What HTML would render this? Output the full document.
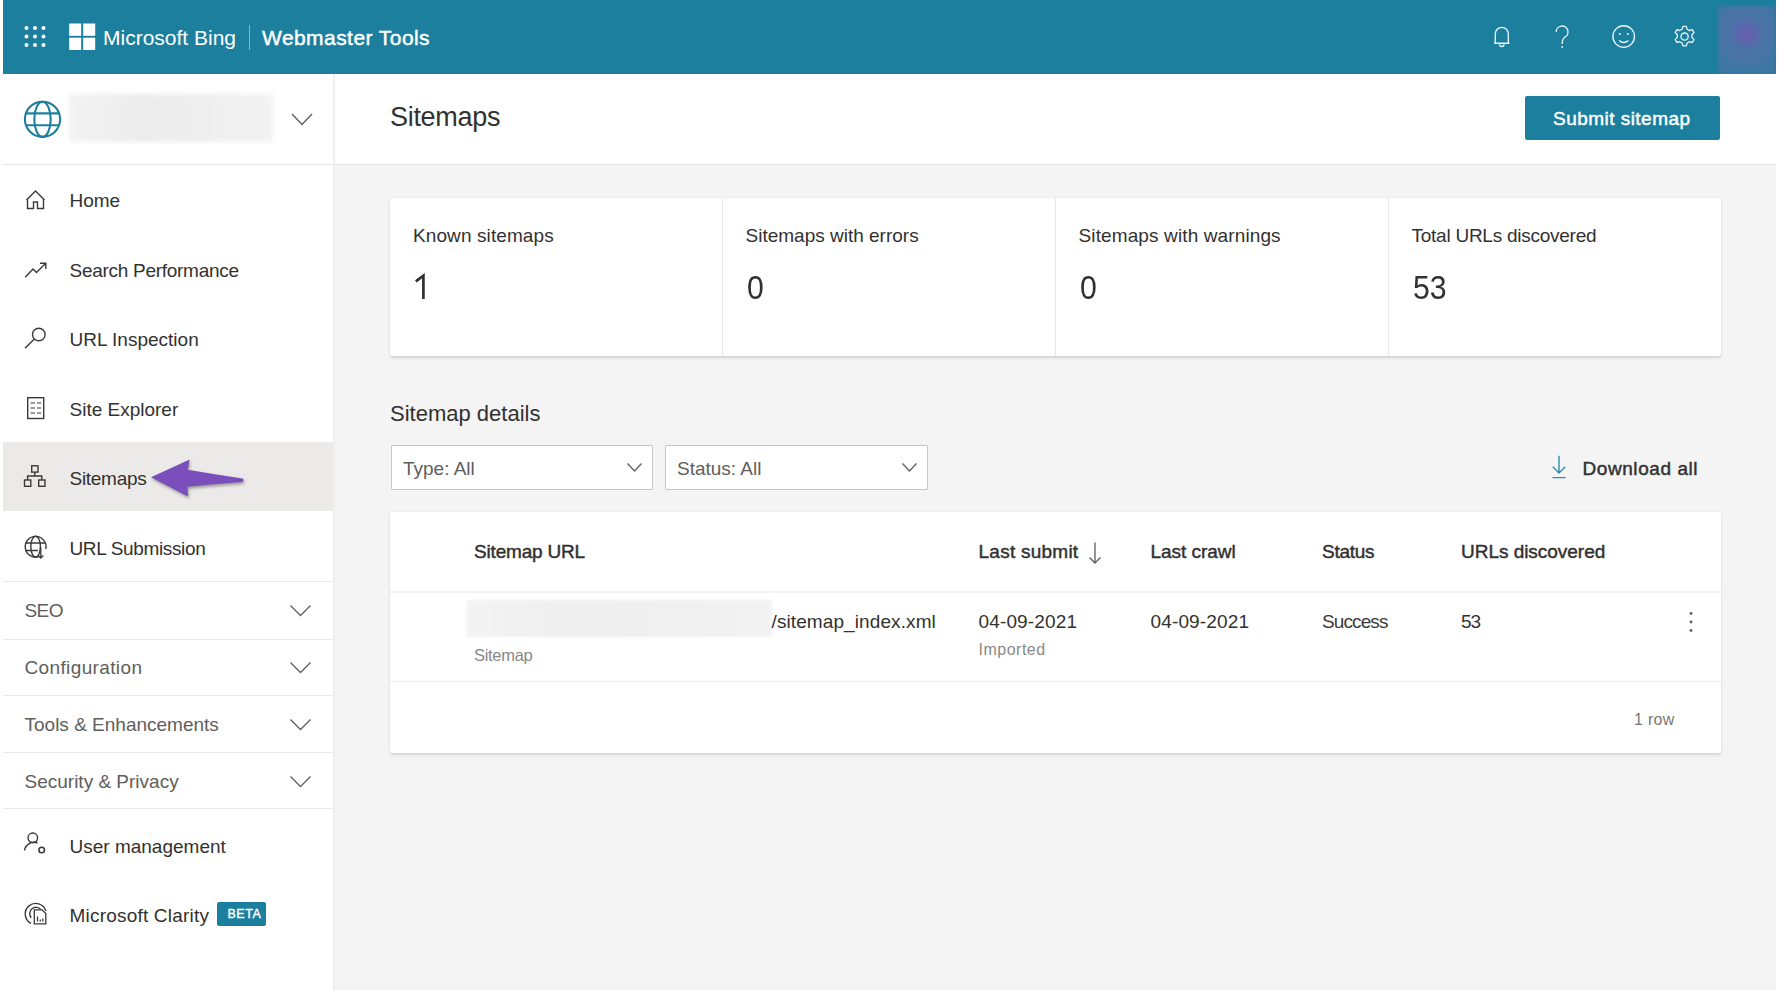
<!DOCTYPE html>
<html><head><meta charset="utf-8">
<style>
html,body{margin:0;padding:0;width:1780px;height:990px;overflow:hidden;background:#fff;font-family:"Liberation Sans",sans-serif;}
.a{position:absolute;}
.t{position:absolute;white-space:nowrap;line-height:1;color:#323130;}
svg{position:absolute;overflow:visible;}
</style></head><body>
<div class="a" style="left:3px;top:0px;width:1773px;height:74px;background:#1d7f9e;"></div>
<svg style="left:0;top:0" width="60" height="73"><g fill="#fff">
<circle cx="26.5" cy="28" r="2"/><circle cx="35" cy="28" r="2"/><circle cx="43.5" cy="28" r="2"/>
<circle cx="26.5" cy="36.5" r="2"/><circle cx="35" cy="36.5" r="2"/><circle cx="43.5" cy="36.5" r="2"/>
<circle cx="26.5" cy="45" r="2"/><circle cx="35" cy="45" r="2"/><circle cx="43.5" cy="45" r="2"/></g></svg>
<svg style="left:69px;top:23px" width="27" height="28"><g fill="#fff">
<rect x="0.2" y="0.5" width="12" height="12.3"/><rect x="14.2" y="0.5" width="12" height="12.3"/>
<rect x="0.2" y="14.7" width="12" height="12.3"/><rect x="14.2" y="14.7" width="12" height="12.3"/></g></svg>
<div class="t" style="left:103px;top:27.12px;font-size:21px;color:#fff;font-weight:normal;">Microsoft Bing</div>
<div class="a" style="left:249px;top:25px;width:1px;height:25px;background:rgba(255,255,255,.45);"></div>
<div class="t" style="left:262px;top:27.12px;font-size:21px;color:#fff;font-weight:normal;letter-spacing:0.44px;-webkit-text-stroke:0.45px #fff">Webmaster Tools</div>
<svg style="left:1490px;top:22px" width="24" height="28" fill="none" stroke="#e8f5f9" stroke-width="1.35">
<path d="M5.3 21 V11.8 a6.5 6.5 0 0 1 13 0 V21 M4 21.2 H19.6 M9.6 22.3 a2.2 2.2 0 0 0 4.4 0"/></svg>
<svg style="left:1552px;top:22px" width="20" height="28" fill="none" stroke="#e8f5f9" stroke-width="1.35">
<path d="M4.2 10 a5.9 5.9 0 1 1 8.5 5.2 C10.8 16.4 10.2 18 10.2 22"/><circle cx="10.2" cy="25" r="0.95" fill="#e8f5f9" stroke="none"/></svg>
<svg style="left:1612px;top:24px" width="24" height="24" fill="none" stroke="#e8f5f9" stroke-width="1.35">
<circle cx="11.7" cy="12.5" r="10.8"/><path d="M7 16.5 Q11.7 20.5 16.4 16.5"/><path d="M6.8 10 H8.8 M14.8 10 H16.8" stroke-width="1.5"/></svg>
<svg style="left:1673px;top:25px" width="24" height="24" fill="none" stroke="#e8f5f9" stroke-width="1.3">
<path d="M9.9 1.3 h3.4 l0.8 2.9 l2.3 1.3 l2.9 -0.8 l1.7 2.9 l-2.1 2.2 v2.6 l2.1 2.2 l-1.7 2.9 l-2.9 -0.8 l-2.3 1.3 l-0.8 2.9 h-3.4 l-0.8 -2.9 l-2.3 -1.3 l-2.9 0.8 l-1.7 -2.9 l2.1 -2.2 v-2.6 l-2.1 -2.2 l1.7 -2.9 l2.9 0.8 l2.3 -1.3 Z" stroke-linejoin="round"/>
<circle cx="11.6" cy="11.6" r="3.6"/></svg>
<div class="a" style="left:1717px;top:5px;width:59px;height:69px;background:radial-gradient(circle at 50% 42%,#6b5db0 0px,#5a67ac 9px,#4b73a6 16px,#4a74a6 26px,#3f77a3 34px);box-shadow:inset 0 0 3px 1px rgba(29,127,158,.7)"></div>
<div class="a" style="left:3px;top:74px;width:1773px;height:90px;background:#fff;"></div>
<div class="a" style="left:3px;top:164px;width:1773px;height:1px;background:#e6e6e6;"></div>
<svg style="left:22px;top:99px" width="42" height="42" fill="none" stroke="#1d7f9e" stroke-width="2.1">
<circle cx="20.5" cy="20.3" r="17.6"/><ellipse cx="20.5" cy="20.3" rx="8.2" ry="17.6"/><path d="M3.5 14.4 H37.5 M3.5 26.3 H37.5"/></svg>
<div class="a" style="left:69px;top:94px;width:204px;height:48px;background:linear-gradient(90deg,#f3f3f3 0%,#ececec 35%,#eeeeee 65%,#f2f2f2 100%);filter:blur(2.5px)"></div>
<svg style="left:290px;top:112px" width="24" height="16" fill="none" stroke="#605e5c" stroke-width="1.4"><path d="M2 2 L12 12.5 L22 2"/></svg>
<div class="t" style="left:390px;top:103.54px;font-size:27px;color:#323130;font-weight:normal;letter-spacing:-0.3px">Sitemaps</div>
<div class="a" style="left:1525px;top:96px;width:195px;height:44px;background:#1d7f9e;border-radius:2px"></div>
<div class="t" style="left:1553px;top:108.92px;font-size:19px;color:#fff;font-weight:normal;letter-spacing:0.47px;-webkit-text-stroke:0.45px #fff">Submit sitemap</div>
<div class="a" style="left:335px;top:165px;width:1441px;height:825px;background:#f4f4f4;"></div>
<div class="a" style="left:3px;top:165px;width:330px;height:825px;background:#fff;"></div>
<div class="a" style="left:333px;top:74px;width:2px;height:916px;background:#eeeeee;"></div>
<div class="a" style="left:3px;top:442px;width:330px;height:69px;background:#ebeae8;"></div>
<div class="t" style="left:69.5px;top:191.42px;font-size:19px;color:#323130;font-weight:normal;">Home</div>
<div class="t" style="left:69.5px;top:260.92px;font-size:19px;color:#323130;font-weight:normal;letter-spacing:-0.28px">Search Performance</div>
<div class="t" style="left:69.5px;top:330.42px;font-size:19px;color:#323130;font-weight:normal;">URL Inspection</div>
<div class="t" style="left:69.5px;top:399.92px;font-size:19px;color:#323130;font-weight:normal;">Site Explorer</div>
<div class="t" style="left:69.5px;top:469.42px;font-size:19px;color:#323130;font-weight:normal;letter-spacing:-0.28px">Sitemaps</div>
<div class="t" style="left:69.5px;top:538.92px;font-size:19px;color:#323130;font-weight:normal;letter-spacing:-0.35px">URL Submission</div>
<div class="a" style="left:3px;top:581px;width:330px;height:1px;background:#e9e9e9;"></div>
<div class="a" style="left:3px;top:639px;width:330px;height:1px;background:#e9e9e9;"></div>
<div class="a" style="left:3px;top:695px;width:330px;height:1px;background:#e9e9e9;"></div>
<div class="a" style="left:3px;top:752px;width:330px;height:1px;background:#e9e9e9;"></div>
<div class="a" style="left:3px;top:808px;width:330px;height:1px;background:#e9e9e9;"></div>
<div class="t" style="left:24.5px;top:600.62px;font-size:19px;color:#605e5c;font-weight:normal;letter-spacing:-0.6px">SEO</div>
<svg style="left:288px;top:602.7px" width="26" height="16" fill="none" stroke="#605e5c" stroke-width="1.3"><path d="M2.5 2.5 L12.5 12.5 L22.5 2.5"/></svg>
<div class="t" style="left:24.5px;top:657.62px;font-size:19px;color:#605e5c;font-weight:normal;letter-spacing:0.37px">Configuration</div>
<svg style="left:288px;top:659.7px" width="26" height="16" fill="none" stroke="#605e5c" stroke-width="1.3"><path d="M2.5 2.5 L12.5 12.5 L22.5 2.5"/></svg>
<div class="t" style="left:24.5px;top:714.62px;font-size:19px;color:#605e5c;font-weight:normal;">Tools &amp; Enhancements</div>
<svg style="left:288px;top:716.7px" width="26" height="16" fill="none" stroke="#605e5c" stroke-width="1.3"><path d="M2.5 2.5 L12.5 12.5 L22.5 2.5"/></svg>
<div class="t" style="left:24.5px;top:771.62px;font-size:19px;color:#605e5c;font-weight:normal;">Security &amp; Privacy</div>
<svg style="left:288px;top:773.7px" width="26" height="16" fill="none" stroke="#605e5c" stroke-width="1.3"><path d="M2.5 2.5 L12.5 12.5 L22.5 2.5"/></svg>
<div class="t" style="left:69.5px;top:837.22px;font-size:19px;color:#323130;font-weight:normal;">User management</div>
<div class="t" style="left:69.5px;top:906.02px;font-size:19px;color:#323130;font-weight:normal;letter-spacing:0.2px">Microsoft Clarity</div>
<svg style="left:0;top:0" width="60" height="990" fill="none" stroke="#3b3a39" stroke-width="1.4">
<path d="M26.5 200 L35.5 191 L44.5 200 M27.5 199 V208.5 H33.5 V202 H37.5 V208.5 H43.5 V199"/>
<path d="M25.2 277.3 L33 269 L36.5 272.5 L45.5 263.5 M40 263.2 H45.8 V269"/>
<circle cx="38.8" cy="334.5" r="6.3"/><path d="M34.3 339 L25 348.3"/>
<rect x="27.7" y="397.7" width="16" height="20.8"/><path d="M30.5 403 H35 M37 403 H41 M30.5 408 H35 M37 408 H41 M30.5 413 H35 M37 413 H41" stroke-width="1.2"/>
<rect x="31.7" y="465.8" width="6.3" height="6.3"/><rect x="24.5" y="480" width="6.3" height="6.3"/><rect x="38.7" y="480" width="6.3" height="6.3"/>
<path d="M34.8 472 V476 M27.6 480 V476 H41.8 V480"/>
<path d="M39 556.6 A10.4 10.4 0 1 1 45.8 549"/><ellipse cx="35.6" cy="546.6" rx="4.8" ry="10.4"/><path d="M25.5 543 H45.5 M25.5 550.5 H38"/><path d="M40.8 547.5 V558 M38.3 555.5 L40.8 558 L43.3 555.5" stroke-width="1.3"/>
<circle cx="32.8" cy="837.8" r="4.8"/><path d="M24.5 850.5 A9.5 9.5 0 0 1 37.5 843"/><circle cx="41.7" cy="850" r="2.8" stroke-width="1.6"/>
<path d="M31 923.3 A10.5 10.5 0 1 1 45.8 911 M31.2 917.8 A6.2 6.2 0 1 1 41 909.6"/>
<path d="M34.3 909.8 H42 L45.8 913.6 V923.8 H34.3 Z" fill="#fff" stroke-width="1.3"/><path d="M37.5 921.5 V916.5 M40.3 921.5 V919.5 M42.8 921.5 V918.5" stroke-width="1.3"/>
</svg>
<div class="a" style="left:217px;top:902px;width:49px;height:24px;background:#1d7f9e;border-radius:2px"></div>
<div class="t" style="left:227.5px;top:907.92px;font-size:12.5px;color:#fff;font-weight:normal;letter-spacing:0.5px;-webkit-text-stroke:0.35px #fff">BETA</div>
<svg style="left:0;top:0;filter:drop-shadow(1px 2px 1.5px rgba(0,0,0,.35))" width="260" height="520"><path fill="#7b4fbb" d="M151 477.3 L189.6 459.4 L187.8 469.8 Q215 474.5 242.5 478.6 Q245 480.3 242 482 Q215 484 187.5 486.8 L188 496.5 Z"/></svg>
<div class="a" style="left:390px;top:198px;width:1331px;height:158px;background:#fff;box-shadow:0 1.5px 3px rgba(0,0,0,.13),0 0 1px rgba(0,0,0,.08);border-radius:2px"></div>
<div class="a" style="left:722px;top:198px;width:1px;height:158px;background:#e8e8e8;"></div>
<div class="a" style="left:1055px;top:198px;width:1px;height:158px;background:#e8e8e8;"></div>
<div class="a" style="left:1388px;top:198px;width:1px;height:158px;background:#e8e8e8;"></div>
<div class="t" style="left:413px;top:225.92px;font-size:19px;color:#323130;font-weight:normal;letter-spacing:0.1px">Known sitemaps</div>
<svg style="left:0;top:0" width="440" height="310" fill="none" stroke="#323130" stroke-width="2.7"><path d="M415.8 281.3 L423.4 275.6 V299" stroke-linejoin="miter"/></svg>
<div class="t" style="left:745.5px;top:225.92px;font-size:19px;color:#323130;font-weight:normal;letter-spacing:0px">Sitemaps with errors</div>
<div class="t" style="left:747.0px;top:270.12px;font-size:34px;color:#323130;font-weight:normal;transform:scaleX(0.89);transform-origin:0 0">0</div>
<div class="t" style="left:1078.5px;top:225.92px;font-size:19px;color:#323130;font-weight:normal;letter-spacing:0.12px">Sitemaps with warnings</div>
<div class="t" style="left:1080.0px;top:270.12px;font-size:34px;color:#323130;font-weight:normal;transform:scaleX(0.89);transform-origin:0 0">0</div>
<div class="t" style="left:1411.5px;top:225.92px;font-size:19px;color:#323130;font-weight:normal;letter-spacing:-0.25px">Total URLs discovered</div>
<div class="t" style="left:1413.0px;top:270.12px;font-size:34px;color:#323130;font-weight:normal;transform:scaleX(0.89);transform-origin:0 0">53</div>
<div class="t" style="left:390px;top:403.38px;font-size:22px;color:#323130;font-weight:normal;">Sitemap details</div>
<div class="a" style="left:391px;top:445px;width:262px;height:45px;background:#fff;box-sizing:border-box;border:1px solid #c8c6c4;border-radius:1px"></div>
<div class="t" style="left:403px;top:458.92px;font-size:19px;color:#605e5c;font-weight:normal;">Type: All</div>
<svg style="left:626px;top:461.5px" width="18" height="12" fill="none" stroke="#605e5c" stroke-width="1.3"><path d="M1.5 1.5 L8.5 9 L15.5 1.5"/></svg>
<div class="a" style="left:665px;top:445px;width:263px;height:45px;background:#fff;box-sizing:border-box;border:1px solid #c8c6c4;border-radius:1px"></div>
<div class="t" style="left:677px;top:458.92px;font-size:19px;color:#605e5c;font-weight:normal;">Status: All</div>
<svg style="left:901px;top:461.5px" width="18" height="12" fill="none" stroke="#605e5c" stroke-width="1.3"><path d="M1.5 1.5 L8.5 9 L15.5 1.5"/></svg>
<svg style="left:1550px;top:455px" width="18" height="26" fill="none" stroke="#2a8db0" stroke-width="1.4"><path d="M9 0.8 V17.8 M2.8 11.8 L9 18 L15.2 11.8 M2.4 22.6 H15.6"/></svg>
<div class="t" style="left:1582.5px;top:458.92px;font-size:19px;color:#323130;font-weight:normal;letter-spacing:0.57px;-webkit-text-stroke:0.45px #323130">Download all</div>
<div class="a" style="left:390px;top:512px;width:1331px;height:241px;background:#fff;box-shadow:0 1.5px 3px rgba(0,0,0,.13),0 0 1px rgba(0,0,0,.08);border-radius:2px"></div>
<div class="a" style="left:390px;top:591px;width:1331px;height:2px;background:#f1f1f1;"></div>
<div class="a" style="left:390px;top:681px;width:1331px;height:1px;background:#efefef;"></div>
<div class="t" style="left:474px;top:542.22px;font-size:19px;color:#323130;font-weight:normal;letter-spacing:-0.18px;-webkit-text-stroke:0.45px #323130">Sitemap URL</div>
<div class="t" style="left:978.5px;top:542.22px;font-size:19px;color:#323130;font-weight:normal;letter-spacing:0.25px;-webkit-text-stroke:0.45px #323130">Last submit</div>
<div class="t" style="left:1150.5px;top:542.22px;font-size:19px;color:#323130;font-weight:normal;letter-spacing:-0.03px;-webkit-text-stroke:0.45px #323130">Last crawl</div>
<div class="t" style="left:1322px;top:542.22px;font-size:19px;color:#323130;font-weight:normal;letter-spacing:-0.28px;-webkit-text-stroke:0.45px #323130">Status</div>
<div class="t" style="left:1461px;top:542.22px;font-size:19px;color:#323130;font-weight:normal;letter-spacing:-0.03px;-webkit-text-stroke:0.45px #323130">URLs discovered</div>
<svg style="left:1088px;top:541px" width="14" height="24" fill="none" stroke="#605e5c" stroke-width="1.3"><path d="M7 1.5 V22 M1.5 16.5 L7 22 L12.5 16.5"/></svg>
<div class="a" style="left:466px;top:600px;width:306px;height:37px;background:linear-gradient(90deg,#f4f4f4,#efefef 30%,#f0f0f0 70%,#f3f3f3);filter:blur(1.2px)"></div>
<div class="t" style="left:771.5px;top:612.42px;font-size:19px;color:#323130;font-weight:normal;letter-spacing:0.1px">/sitemap_index.xml</div>
<div class="t" style="left:978.5px;top:611.72px;font-size:19px;color:#323130;font-weight:normal;letter-spacing:0.14px">04-09-2021</div>
<div class="t" style="left:1150.5px;top:611.72px;font-size:19px;color:#323130;font-weight:normal;letter-spacing:0.14px">04-09-2021</div>
<div class="t" style="left:1322px;top:611.72px;font-size:19px;color:#3b3a39;font-weight:normal;letter-spacing:-0.9px">Success</div>
<div class="t" style="left:1461px;top:611.72px;font-size:19px;color:#323130;font-weight:normal;letter-spacing:-1px">53</div>
<div class="t" style="left:474px;top:647.03px;font-size:16.5px;color:#8a8886;font-weight:normal;letter-spacing:-0.3px">Sitemap</div>
<div class="t" style="left:978.5px;top:642.26px;font-size:16px;color:#8a8886;font-weight:normal;letter-spacing:0.5px">Imported</div>
<svg style="left:1686px;top:610px" width="10" height="24" fill="#605e5c"><circle cx="5" cy="3.5" r="1.4"/><circle cx="5" cy="12" r="1.4"/><circle cx="5" cy="20.5" r="1.4"/></svg>
<div class="t" style="left:1634px;top:712.26px;font-size:16px;color:#797775;font-weight:normal;letter-spacing:0.3px">1 row</div>
</body></html>
